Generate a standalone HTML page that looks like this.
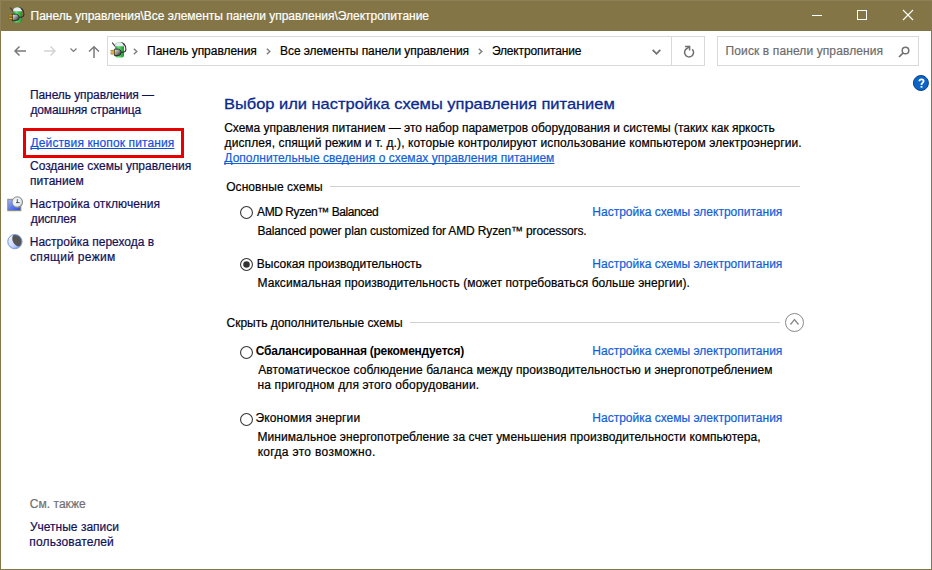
<!DOCTYPE html>
<html><head><meta charset="utf-8">
<style>
html,body{margin:0;padding:0;}
body{width:932px;height:570px;position:relative;overflow:hidden;background:#fff;font-family:"Liberation Sans",sans-serif;}
.t{position:absolute;white-space:nowrap;line-height:normal;text-decoration-skip-ink:none;}
.frame{position:absolute;left:0;top:0;width:932px;height:570px;box-sizing:border-box;border:1px solid #85774a;border-top:0;}
.titlebar{position:absolute;left:0;top:0;width:932px;height:31px;background:#837545;}
.box{position:absolute;box-sizing:border-box;border:1px solid #d9d9d9;}
.hl{position:absolute;height:1px;background:#d0d0d0;}
.radio{position:absolute;width:13px;height:13px;box-sizing:border-box;border:1px solid #333;border-radius:50%;background:#fff;}
.radio.on::after{content:"";position:absolute;left:2.5px;top:2.5px;width:6px;height:6px;border-radius:50%;background:#333;}
svg{position:absolute;overflow:visible;}
</style></head><body>

<div class="titlebar"></div>
<div class="frame"></div>
<div style="position:absolute;left:0;top:0;width:932px;height:1px;background:#8e8157"></div>
<div style="position:absolute;left:0;top:0;width:1px;height:31px;background:#8e8157"></div>
<svg style="left:8px;top:6px" width="17" height="17" viewBox="0 0 17 17">
  <defs><linearGradient id="pg8" x1="0" y1="0" x2="1" y2="1"><stop offset="0" stop-color="#f4f4f4"/><stop offset="0.45" stop-color="#9a9a9a"/><stop offset="1" stop-color="#1e1e1e"/></linearGradient>
  <linearGradient id="bg8" x1="0" y1="0" x2="1" y2="0"><stop offset="0" stop-color="#1f9a30"/><stop offset="0.35" stop-color="#66dd74"/><stop offset="1" stop-color="#149a28"/></linearGradient></defs>
  <path d="M2.2 1.6 L5.2 5.4" stroke="#3a3a3a" stroke-width="1.1" fill="none"/>
  <path d="M5.2 4 Q5.2 1.3 9.6 1.3 Q14 1.3 14 4 V14.5 Q14 16.5 12 16.5 H7.2 Q5.2 16.5 5.2 14.5 Z" fill="url(#bg8)"/>
  <path d="M5.3 4.2 Q5.3 1.4 9.6 1.4 Q13.9 1.4 13.9 4.2 V5.3 H5.3 Z" fill="#ebeaf8"/>
  <path d="M11.5 1.5 Q13.6 1.6 13.9 3.8" stroke="#333" stroke-width="0.9" fill="none"/>
  <path d="M10.8 11.3 H12.5 Q15.6 11.2 15.9 8.5 Q16 5 13.6 2.5" stroke="#2e2e2e" stroke-width="1.1" fill="none"/>
  <path d="M4.4 8.2 H8.3 Q11.2 8.6 11.2 11.4 Q11.2 14.2 8.3 14.6 H4.4 Z" fill="url(#pg8)" stroke="#1a1a1a" stroke-width="0.8"/>
  <rect x="0.9" y="9.1" width="3.5" height="1.3" fill="#e8a800" stroke="#5a4600" stroke-width="0.3"/>
  <rect x="0.9" y="11.8" width="3.5" height="1.3" fill="#e8a800" stroke="#5a4600" stroke-width="0.3"/>
</svg>
<div style="position:absolute;left:812px;top:15px;width:10px;height:1px;background:#fff"></div>
<div style="position:absolute;left:857px;top:10px;width:10px;height:10px;box-sizing:border-box;border:1px solid #fff"></div>
<svg style="left:903px;top:10px" width="10" height="10" viewBox="0 0 10 10"><path d="M0 0L10 10M10 0L0 10" stroke="#fff" stroke-width="1.1"/></svg>
<svg style="left:14px;top:46px" width="12" height="10" viewBox="0 0 12 10"><path d="M5.5 0.5L1 5L5.5 9.5M1 5H12" stroke="#7a7a7a" stroke-width="1.5" fill="none"/></svg>
<svg style="left:44px;top:46px" width="12" height="10" viewBox="0 0 12 10"><path d="M6.5 0.5L11 5L6.5 9.5M11 5H0" stroke="#d4d4d4" stroke-width="1.5" fill="none"/></svg>
<svg style="left:70px;top:48px" width="7" height="4" viewBox="0 0 7 4"><path d="M0.5 0.5L3.5 3.5L6.5 0.5" stroke="#7a7a7a" stroke-width="1.2" fill="none"/></svg>
<svg style="left:88px;top:46px" width="12" height="12" viewBox="0 0 12 12"><path d="M1 5.5L6 0.8L11 5.5M6 1V12" stroke="#7a7a7a" stroke-width="1.5" fill="none"/></svg>
<div class="box" style="left:107px;top:36px;width:598px;height:30px"></div>
<div style="position:absolute;left:671px;top:37px;width:1px;height:28px;background:#d9d9d9"></div>
<svg style="left:109.5px;top:41.3px" width="17" height="17" viewBox="0 0 17 17">
  <defs><linearGradient id="pg109.5" x1="0" y1="0" x2="1" y2="1"><stop offset="0" stop-color="#f4f4f4"/><stop offset="0.45" stop-color="#9a9a9a"/><stop offset="1" stop-color="#1e1e1e"/></linearGradient>
  <linearGradient id="bg109.5" x1="0" y1="0" x2="1" y2="0"><stop offset="0" stop-color="#1f9a30"/><stop offset="0.35" stop-color="#66dd74"/><stop offset="1" stop-color="#149a28"/></linearGradient></defs>
  <path d="M2.2 1.6 L5.2 5.4" stroke="#3a3a3a" stroke-width="1.1" fill="none"/>
  <path d="M5.2 4 Q5.2 1.3 9.6 1.3 Q14 1.3 14 4 V14.5 Q14 16.5 12 16.5 H7.2 Q5.2 16.5 5.2 14.5 Z" fill="url(#bg109.5)"/>
  <path d="M5.3 4.2 Q5.3 1.4 9.6 1.4 Q13.9 1.4 13.9 4.2 V5.3 H5.3 Z" fill="#ebeaf8"/>
  <path d="M11.5 1.5 Q13.6 1.6 13.9 3.8" stroke="#333" stroke-width="0.9" fill="none"/>
  <path d="M10.8 11.3 H12.5 Q15.6 11.2 15.9 8.5 Q16 5 13.6 2.5" stroke="#2e2e2e" stroke-width="1.1" fill="none"/>
  <path d="M4.4 8.2 H8.3 Q11.2 8.6 11.2 11.4 Q11.2 14.2 8.3 14.6 H4.4 Z" fill="url(#pg109.5)" stroke="#1a1a1a" stroke-width="0.8"/>
  <rect x="0.9" y="9.1" width="3.5" height="1.3" fill="#e8a800" stroke="#5a4600" stroke-width="0.3"/>
  <rect x="0.9" y="11.8" width="3.5" height="1.3" fill="#e8a800" stroke="#5a4600" stroke-width="0.3"/>
</svg>
<svg style="left:133px;top:48px" width="5" height="7" viewBox="0 0 5 7"><path d="M0.8 0.7L3.8 3.5L0.8 6.3" stroke="#808080" stroke-width="1.5" fill="none"/></svg><svg style="left:266px;top:48px" width="5" height="7" viewBox="0 0 5 7"><path d="M0.8 0.7L3.8 3.5L0.8 6.3" stroke="#808080" stroke-width="1.5" fill="none"/></svg><svg style="left:478px;top:48px" width="5" height="7" viewBox="0 0 5 7"><path d="M0.8 0.7L3.8 3.5L0.8 6.3" stroke="#808080" stroke-width="1.5" fill="none"/></svg>
<svg style="left:651.6px;top:49.2px" width="9" height="6" viewBox="0 0 9 6"><path d="M0.7 0.9L4.5 4.8L8.3 0.9" stroke="#727272" stroke-width="1.8" fill="none"/></svg>
<svg style="left:683px;top:45px" width="12" height="12" viewBox="0 0 12 12"><path d="M9.18 4.2A4.5 4.5 0 1 1 4.29 3.3L6.6 1.4" stroke="#707070" stroke-width="1.5" fill="none"/><path d="M2 1.4H6.6V5.4" stroke="#707070" stroke-width="1.5" fill="none"/></svg>
<div class="box" style="left:717px;top:36px;width:202px;height:30px"></div>
<svg style="left:898.3px;top:45.6px" width="12" height="12" viewBox="0 0 12 12"><circle cx="7.5" cy="4.5" r="3.3" stroke="#727272" stroke-width="1.5" fill="none"/><path d="M5.2 6.8L1 11" stroke="#727272" stroke-width="1.7"/></svg>
<svg style="left:913px;top:75px" width="16" height="16" viewBox="0 0 16 16"><circle cx="7.9" cy="8" r="7.5" fill="#0b64c6" stroke="#08418a" stroke-width="1"/><path d="M6.3 6.3Q6.3 4.3 8.5 4.3Q10.6 4.3 10.6 6.1Q10.6 7.3 9.4 8Q8.5 8.6 8.5 9.6V10.1" stroke="#fff" stroke-width="1.8" fill="none"/><rect x="7.6" y="11" width="1.8" height="1.7" fill="#fff"/></svg>
<div style="position:absolute;left:23px;top:128px;width:161px;height:30px;box-sizing:border-box;border:3px solid #e60000"></div>
<svg style="left:7px;top:192px" width="16" height="20" viewBox="0 0 16 20">
  <defs><linearGradient id="mg" x1="0" y1="0" x2="1" y2="1"><stop offset="0" stop-color="#a8b8ff"/><stop offset="0.5" stop-color="#5a78f0"/><stop offset="1" stop-color="#2a48e0"/></linearGradient>
  <radialGradient id="cg" cx="0.45" cy="0.45" r="0.6"><stop offset="0" stop-color="#ffffff"/><stop offset="0.7" stop-color="#dfe8ee"/><stop offset="1" stop-color="#8a8a8a"/></radialGradient></defs>
  <rect x="0.8" y="7.3" width="13" height="11.4" fill="url(#mg)" stroke="#8a8a7a" stroke-width="1"/>
  <circle cx="10.3" cy="10.1" r="5.3" fill="url(#cg)" stroke="#8a8a8a" stroke-width="1"/>
  <path d="M10.3 7.2V10.9M9 10.6H12.6" stroke="#4a5560" stroke-width="1" fill="none"/>
</svg>
<svg style="left:7px;top:234.4px" width="16" height="16" viewBox="0 0 16 16">
  <defs><clipPath id="mc"><circle cx="7.9" cy="7.6" r="6.8"/></clipPath>
  <linearGradient id="ml" x1="0" y1="0" x2="1" y2="1"><stop offset="0" stop-color="#ffffff"/><stop offset="0.6" stop-color="#c8d4ff"/><stop offset="1" stop-color="#4a7ae8"/></linearGradient></defs>
  <circle cx="7.9" cy="7.6" r="7.2" fill="url(#ml)" stroke="#9aa8c8" stroke-width="0.9"/>
  <g clip-path="url(#mc)"><ellipse cx="10.8" cy="5.8" rx="5.2" ry="6.8" transform="rotate(-25 10.8 5.8)" fill="#555"/></g>
  <circle cx="7.9" cy="7.6" r="6.9" stroke="#6a9af0" stroke-width="0.8" fill="none" opacity="0.7"/>
</svg>
<div class="hl" style="left:330px;top:186px;width:470px"></div>
<div class="hl" style="left:410px;top:322px;width:370px"></div>
<svg style="left:785px;top:313px" width="19" height="19" viewBox="0 0 19 19"><circle cx="9.5" cy="9.5" r="9" stroke="#8a8a8a" stroke-width="1" fill="none"/><path d="M5.5 11.5L9.5 6.5L13.5 11.5" stroke="#8a8a8a" stroke-width="1.3" fill="none"/></svg>
<svg style="left:240px;top:206px" width="13" height="13" viewBox="0 0 13 13"><circle cx="6.5" cy="6.5" r="5.95" stroke="#363636" stroke-width="1.1" fill="#fff"/></svg>
<svg style="left:240px;top:258px" width="13" height="13" viewBox="0 0 13 13"><circle cx="6.5" cy="6.5" r="5.95" stroke="#363636" stroke-width="1.1" fill="#fff"/><circle cx="6.5" cy="6.5" r="3.25" fill="#333"/></svg>
<svg style="left:240px;top:346px" width="13" height="13" viewBox="0 0 13 13"><circle cx="6.5" cy="6.5" r="5.95" stroke="#363636" stroke-width="1.1" fill="#fff"/></svg>
<svg style="left:240px;top:413px" width="13" height="13" viewBox="0 0 13 13"><circle cx="6.5" cy="6.5" r="5.95" stroke="#363636" stroke-width="1.1" fill="#fff"/></svg>

<div class="t" style="left:30.55px;top:9px;font-size:12px;font-weight:400;color:#ffffff;letter-spacing:-0.015px;-webkit-text-stroke:0.2px #ffffff;">Панель управления\Все элементы панели управления\Электропитание</div>
<div class="t" style="left:147.07px;top:44px;font-size:12px;font-weight:400;color:#000000;letter-spacing:-0.027px;-webkit-text-stroke:0.2px #000000;">Панель управления</div>
<div class="t" style="left:280.07px;top:44px;font-size:12px;font-weight:400;color:#000000;letter-spacing:-0.072px;-webkit-text-stroke:0.2px #000000;">Все элементы панели управления</div>
<div class="t" style="left:491.89px;top:44px;font-size:12px;font-weight:400;color:#000000;letter-spacing:-0.137px;-webkit-text-stroke:0.2px #000000;">Электропитание</div>
<div class="t" style="left:725.60px;top:44px;font-size:12px;font-weight:400;color:#6d6d6d;letter-spacing:0.110px;-webkit-text-stroke:0.2px #6d6d6d;">Поиск в панели управления</div>
<div class="t" style="left:29.98px;top:88px;font-size:12px;font-weight:400;color:#121058;letter-spacing:-0.084px;-webkit-text-stroke:0.2px #121058;">Панель управления —</div>
<div class="t" style="left:30.46px;top:103px;font-size:12px;font-weight:400;color:#121058;letter-spacing:-0.136px;-webkit-text-stroke:0.2px #121058;">домашняя страница</div>
<div class="t" style="left:30.55px;top:136px;font-size:12px;font-weight:400;color:#1450e0;letter-spacing:0.113px;-webkit-text-stroke:0.2px #1450e0;text-decoration:underline;">Действия кнопок питания</div>
<div class="t" style="left:29.99px;top:159px;font-size:12px;font-weight:400;color:#121058;letter-spacing:-0.019px;-webkit-text-stroke:0.2px #121058;">Создание схемы управления</div>
<div class="t" style="left:30.06px;top:174px;font-size:12px;font-weight:400;color:#121058;letter-spacing:0.017px;-webkit-text-stroke:0.2px #121058;">питанием</div>
<div class="t" style="left:29.74px;top:197px;font-size:12px;font-weight:400;color:#121058;letter-spacing:0.115px;-webkit-text-stroke:0.2px #121058;">Настройка отключения</div>
<div class="t" style="left:30.85px;top:212px;font-size:12px;font-weight:400;color:#121058;letter-spacing:-0.151px;-webkit-text-stroke:0.2px #121058;">дисплея</div>
<div class="t" style="left:29.74px;top:235px;font-size:12px;font-weight:400;color:#121058;letter-spacing:0.006px;-webkit-text-stroke:0.2px #121058;">Настройка перехода в</div>
<div class="t" style="left:30.03px;top:250px;font-size:12px;font-weight:400;color:#121058;letter-spacing:0.317px;-webkit-text-stroke:0.2px #121058;">спящий режим</div>
<div class="t" style="left:29.70px;top:497px;font-size:12px;font-weight:400;color:#707070;letter-spacing:0.050px;-webkit-text-stroke:0.2px #707070;">См. также</div>
<div class="t" style="left:29.89px;top:520px;font-size:12px;font-weight:400;color:#121058;letter-spacing:0.014px;-webkit-text-stroke:0.2px #121058;">Учетные записи</div>
<div class="t" style="left:29.33px;top:535px;font-size:12px;font-weight:400;color:#121058;letter-spacing:0.135px;-webkit-text-stroke:0.2px #121058;">пользователей</div>
<div class="t" style="left:224.32px;top:95px;font-size:15px;font-weight:400;color:#0b2a90;transform-origin:0 0;transform:scaleX(1.0955);-webkit-text-stroke:0.3px #0b2a90;">Выбор или настройка схемы управления питанием</div>
<div class="t" style="left:224.17px;top:121px;font-size:12px;font-weight:400;color:#000000;letter-spacing:-0.018px;-webkit-text-stroke:0.2px #000000;">Схема управления питанием — это набор параметров оборудования и системы (таких как яркость</div>
<div class="t" style="left:224.55px;top:136px;font-size:12px;font-weight:400;color:#000000;letter-spacing:0.107px;-webkit-text-stroke:0.2px #000000;">дисплея, спящий режим и т. д.), которые контролируют использование компьютером электроэнергии.</div>
<div class="t" style="left:224.36px;top:151px;font-size:12px;font-weight:400;color:#1060d8;letter-spacing:0.022px;-webkit-text-stroke:0.2px #1060d8;text-decoration:underline;">Дополнительные сведения о схемах управления питанием</div>
<div class="t" style="left:226.20px;top:180px;font-size:12px;font-weight:400;color:#000000;letter-spacing:0.065px;-webkit-text-stroke:0.2px #000000;">Основные схемы</div>
<div class="t" style="left:257.09px;top:205px;font-size:12px;font-weight:400;color:#000000;letter-spacing:-0.431px;-webkit-text-stroke:0.2px #000000;">AMD Ryzen™ Balanced</div>
<div class="t" style="left:592.35px;top:205px;font-size:12px;font-weight:400;color:#1060d8;letter-spacing:-0.000px;-webkit-text-stroke:0.2px #1060d8;">Настройка схемы электропитания</div>
<div class="t" style="left:257.45px;top:224px;font-size:12px;font-weight:400;color:#000000;letter-spacing:-0.148px;-webkit-text-stroke:0.2px #000000;">Balanced power plan customized for AMD Ryzen™ processors.</div>
<div class="t" style="left:256.87px;top:257px;font-size:12px;font-weight:400;color:#000000;letter-spacing:-0.033px;-webkit-text-stroke:0.2px #000000;">Высокая производительность</div>
<div class="t" style="left:592.35px;top:257px;font-size:12px;font-weight:400;color:#1060d8;letter-spacing:-0.000px;-webkit-text-stroke:0.2px #1060d8;">Настройка схемы электропитания</div>
<div class="t" style="left:257.47px;top:276px;font-size:12px;font-weight:400;color:#000000;letter-spacing:0.056px;-webkit-text-stroke:0.2px #000000;">Максимальная производительность (может потребоваться больше энергии).</div>
<div class="t" style="left:226.57px;top:316px;font-size:12px;font-weight:400;color:#000000;letter-spacing:-0.024px;-webkit-text-stroke:0.2px #000000;">Скрыть дополнительные схемы</div>
<div class="t" style="left:255.81px;top:344px;font-size:12px;font-weight:700;color:#000000;letter-spacing:-0.251px;-webkit-text-stroke:0.0px #000000;">Сбалансированная (рекомендуется)</div>
<div class="t" style="left:592.35px;top:344px;font-size:12px;font-weight:400;color:#1060d8;letter-spacing:-0.000px;-webkit-text-stroke:0.2px #1060d8;">Настройка схемы электропитания</div>
<div class="t" style="left:258.29px;top:363px;font-size:12px;font-weight:400;color:#000000;letter-spacing:0.077px;-webkit-text-stroke:0.2px #000000;">Автоматическое соблюдение баланса между производительностью и энергопотреблением</div>
<div class="t" style="left:257.62px;top:378px;font-size:12px;font-weight:400;color:#000000;letter-spacing:0.126px;-webkit-text-stroke:0.2px #000000;">на пригодном для этого оборудовании.</div>
<div class="t" style="left:255.45px;top:411px;font-size:12px;font-weight:400;color:#000000;letter-spacing:0.136px;-webkit-text-stroke:0.2px #000000;">Экономия энергии</div>
<div class="t" style="left:592.35px;top:411px;font-size:12px;font-weight:400;color:#1060d8;letter-spacing:-0.000px;-webkit-text-stroke:0.2px #1060d8;">Настройка схемы электропитания</div>
<div class="t" style="left:257.47px;top:430px;font-size:12px;font-weight:400;color:#000000;letter-spacing:0.068px;-webkit-text-stroke:0.2px #000000;">Минимальное энергопотребление за счет уменьшения производительности компьютера,</div>
<div class="t" style="left:257.65px;top:445px;font-size:12px;font-weight:400;color:#000000;letter-spacing:0.321px;-webkit-text-stroke:0.2px #000000;">когда это возможно.</div>
</body></html>
